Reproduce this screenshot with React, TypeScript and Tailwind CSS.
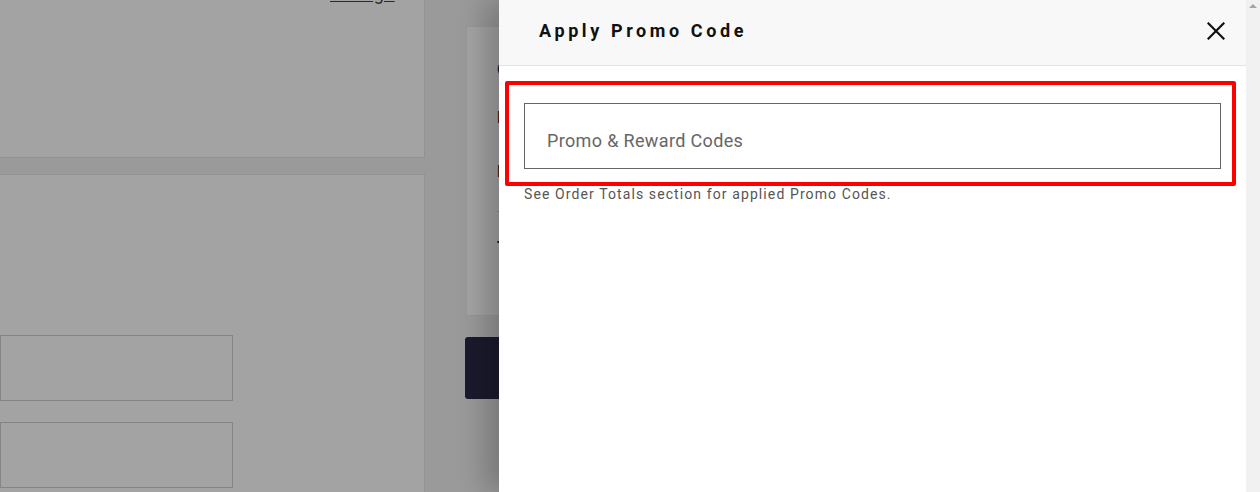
function BackgroundPage() {
  return (
    <div className="flex h-full gap-[41px] bg-[#9a9a9a]">
      {/* Main column */}
      <div className="flex w-[425px] flex-col gap-4">
        <div className="relative h-[158px] border-r border-b border-[#929292] bg-[#a3a3a3]">
          <span className="absolute left-[330px] -top-[17px] text-[18px] leading-[22px] tracking-[0.6px] text-[#2a2a2a] underline">Change</span>
        </div>
        <div className="flex flex-1 flex-col gap-[21px] border-t border-r border-[#929292] bg-[#a3a3a3] pt-[160px]">
          <div className="h-[66px] w-[233px] border border-[#858585]" />
          <div className="h-[66px] w-[233px] border border-[#858585]" />
        </div>
      </div>

      {/* Summary column */}
      <div className="flex w-[320px] flex-col pt-[26px]">
        <div className="flex h-[290px] flex-col border border-[#979797] bg-[#a4a4a4] pl-[30px] pt-[33px] text-[16px] leading-[20px] font-bold">
          <span className="text-[#1a1f4a]">Order Summary</span>
          <span className="mt-[28px] text-[#4a1414]">Promo Code</span>
          <span className="mt-[34px] text-[#4a1414]">Reward Code</span>
          <div className="mt-[29px] h-px bg-[#8a8a8a]" />
          <span className="mt-[26px] text-[#1a1a1a]">Total</span>
        </div>
        <div className="mt-[21px] -ml-px h-[62px] rounded-[3px] bg-[#1b1a2d]" />
      </div>
    </div>
  );
}

function PromoDrawer() {
  return (
    <div className="absolute top-0 right-0 flex h-full w-[761px] shadow-[-14px_0_26px_rgba(0,0,0,0.22)]">
      <div className="flex flex-1 flex-col bg-white">
        {/* Header */}
        <div className="flex h-[66px] items-center justify-between border-b border-[#e2e2e2] bg-[#f8f8f8] pl-[40px] pr-[21px]">
          <h2 className="pb-[5px] text-[18px] font-bold tracking-[3.6px] text-[#111]">Apply Promo Code</h2>
          <button className="mb-[4px] text-[#111]">
            <svg width="18" height="18" viewBox="0 0 18 18" fill="none" stroke="currentColor" strokeWidth="2.2" strokeLinecap="square">
              <path d="M1.5 1.5 16.5 16.5M16.5 1.5 1.5 16.5" />
            </svg>
          </button>
        </div>

        {/* Body */}
        <div className="pl-[6px] pr-[10px] pt-[15px]">
          <div className="rounded-[2px] border-4 border-[#ff0000] pl-[15px] pr-[11px] pt-[18px] pb-[13px]">
            <input
              type="text"
              placeholder="Promo & Reward Codes"
              className="h-[66px] w-full border border-[#666] bg-white px-[22px] pt-[8px] text-[18px] tracking-[0.35px] text-[#333] outline-none placeholder:text-[#666]"
            />
          </div>
          <p className="mt-[-2px] pl-[19px] text-[14px] leading-[20px] tracking-[1.1px] text-[#555]">
            See Order Totals section for applied Promo Codes.
          </p>
        </div>
      </div>

      {/* Scrollbar */}
      <div className="flex w-[14px] justify-center bg-[#f1f1f1] pt-[4px]">
        <div className="h-0 w-0 border-x-[4px] border-b-[4px] border-x-transparent border-b-[#a3a3a3]" />
      </div>
    </div>
  );
}

export default function App() {
  return (
    <div className="relative h-[492px] w-[1260px] overflow-hidden font-['Roboto',sans-serif]">
      <BackgroundPage />
      <PromoDrawer />
    </div>
  );
}
